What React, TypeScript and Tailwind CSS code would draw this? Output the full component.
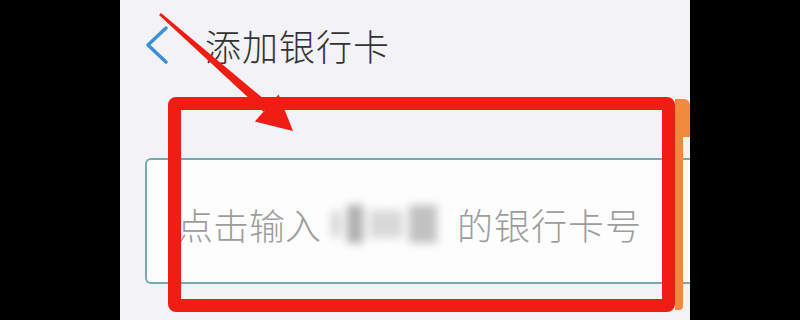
export default function App() {
  return (
    <div className="flex h-[320px] w-[800px] overflow-hidden bg-black">
      <div className="w-[120px] shrink-0 bg-black" />
      <div
        className="relative w-[570px] shrink-0 overflow-hidden bg-[#f3f2f7]"
        style={{ fontFamily: '"Noto Sans CJK SC", "Noto Sans", sans-serif' }}
      >
        {/* header */}
        <div className="flex h-[90px] items-center pl-[25px]">
          <svg width="24" height="40" viewBox="0 0 24 40" fill="none">
            <polyline
              points="21,3 3,20 21,37"
              stroke="#3a8fd8"
              strokeWidth="3.5"
              strokeLinecap="round"
              strokeLinejoin="round"
            />
          </svg>
          <span className="ml-[36px] text-[36px] font-light leading-none tracking-[1px] text-[#333333]">添加银行卡</span>
        </div>

        {/* card number input */}
        <div className="ml-[25px] mt-[68px] flex h-[126px] items-center rounded-l-[6px] border-2 border-r-0 border-[#74a9af] bg-[#fdfdfd] pl-[30px] pt-[6px]">
          <span className="text-[36px] font-light leading-none text-[#9d9d9d]">点击输入</span>
          <span className="ml-[10px] flex h-[44px] w-[112px] items-center gap-[6px] blur-[4px]">
            <span className="h-[26px] w-[10px] bg-[#d6d6d6]" />
            <span className="h-[38px] w-[16px] bg-[#b0b0b0]" />
            <span className="h-[28px] w-[34px] bg-[#d9d9d9]" />
            <span className="h-[38px] w-[28px] bg-[#c2c2c2]" />
          </span>
          <span className="ml-[14px] text-[36px] font-light leading-none tracking-[1px] text-[#9d9d9d]">的银行卡号</span>
        </div>

        {/* annotation: orange edge, red box, arrow */}
        <div className="absolute left-[555px] top-[99px] h-[211px] w-[8px] rounded-r-[4px] bg-[#f08b3e]" />
        <div className="absolute left-[555px] top-[99px] h-[38px] w-[15px] rounded-tr-[6px] bg-[#f08b3e]" />
        <div className="absolute left-[48px] top-[97px] h-[215px] w-[507px] rounded-[8px] border-[13px] border-[#ef1d14]" />
        <svg className="absolute left-0 top-0" width="570" height="320" viewBox="0 0 570 320">
          <polygon points="39,15 41,13 150,104.1 143.4,111.7" fill="#ef1d14" />
          <polygon points="173,131 134.8,121.4 158.6,94.4" fill="#ef1d14" />
        </svg>
      </div>
      <div className="w-[110px] shrink-0 bg-black" />
    </div>
  );
}
